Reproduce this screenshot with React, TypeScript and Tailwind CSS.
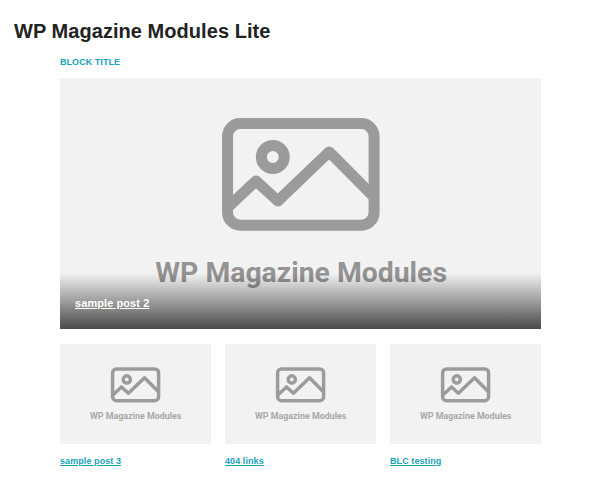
function Placeholder({ className, label }: { className: string; label: string }) {
  return (
    <svg viewBox="0 0 151 100" preserveAspectRatio="xMidYMid slice" className={className}>
      <rect width="151" height="100" fill="#f2f2f2" />
      <g fill="none" stroke="#9b9b9b" strokeWidth="3.45" strokeLinejoin="round" strokeLinecap="round">
        <rect x="52.6" y="24.9" width="46" height="31.9" rx="4" />
        <circle cx="66.8" cy="35.4" r="3.6" />
        <path d="M52.9 51 L61.5 42.9 L68.4 49.2 L84.5 33.8 L98.4 47.8" />
      </g>
      <text x="75.7" y="74.6" textAnchor="middle" fontFamily="Roboto, sans-serif" fontWeight="700" fontSize="8.9" fill={label}>
        WP Magazine Modules
      </text>
    </svg>
  );
}

const posts = ["sample post 3", "404 links", "BLC testing"];

export default function App() {
  return (
    <div className="min-h-[479px] bg-white px-[14px] pt-[20px] font-['Liberation_Sans',sans-serif]">
      <h1 className="text-[20px] tracking-[0.05px] leading-[23px] font-bold text-[#222222]">WP Magazine Modules Lite</h1>
      <div className="mt-[14px] ml-[46px] w-[481px]">
        <h2 className="text-[9px] leading-[11px] font-bold tracking-[0.05px] uppercase text-[#17a2b8]">Block title</h2>
        <div className="relative mt-[10px] h-[251px]">
          <Placeholder className="block h-full w-full" label="#949494" />
          <div className="absolute inset-x-0 bottom-0 flex h-[56px] items-start bg-gradient-to-b from-black/0 to-black/70 px-[15px] pt-[22px]">
            <a className="text-[11px] leading-[16px] font-bold tracking-[0.08px] text-white underline">sample post 2</a>
          </div>
        </div>
        <div className="mt-[15px] grid grid-cols-3 gap-[14px]">
          {posts.map((p) => (
            <div key={p}>
              <Placeholder className="block h-[100px] w-full" label="#a8a8a8" />
              <a className="mt-[10px] block text-[9px] leading-[14px] font-bold tracking-[0.08px] text-[#17a2b8] underline">{p}</a>
            </div>
          ))}
        </div>
      </div>
    </div>
  );
}
